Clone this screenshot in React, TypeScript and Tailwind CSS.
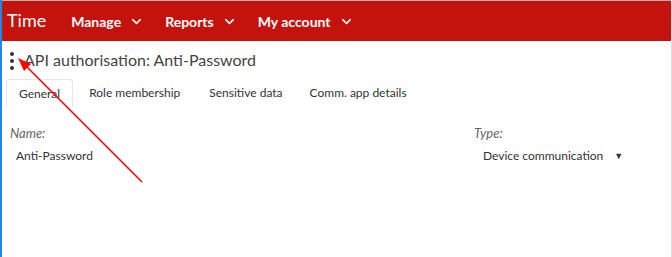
import { ChevronDown } from "lucide-react";

const font = { fontFamily: "Lato, 'Noto Sans', sans-serif" };

export default function App() {
  return (
    <div className="relative w-[672px] h-[257px] bg-white overflow-hidden border-l-2 border-[#1e88e5] border-r border-r-[#e0e0e0]" style={font}>
      {/* -------------------------------------------BARRA SUPERIOR------------------------------------------- */}
      <div className="h-px bg-[#b0b0b0]" />
      <nav className="h-[40px] bg-[#c4120c] flex items-center text-white pl-[5px]">
        <span className="text-[18px] leading-none mr-[25px] pb-[2px]">Time</span>
        <NavItem label="Manage" />
        <NavItem label="Reports" />
        <NavItem label="My account" />
      </nav>

      {/* -------------------------------------------TITULO------------------------------------------- */}
      <div className="flex items-center h-[38px] pl-[8px]">
        <div className="flex flex-col gap-[3px] mr-[10px] mt-[1px]">
          <span className="w-[4px] h-[4px] rounded-full bg-[#333]" />
          <span className="w-[4px] h-[4px] rounded-full bg-[#333]" />
          <span className="w-[4px] h-[4px] rounded-full bg-[#333]" />
        </div>
        <h1 className="text-[16px] text-[#444]">API authorisation: Anti-Password</h1>
      </div>

      {/* -------------------------------------------PESTAÑAS------------------------------------------- */}
      <div className="flex items-end pl-[4px] text-[12px] text-[#333]">
        <div className="h-[28px] px-[12px] flex items-center border border-b-0 border-[#e6e6e6] rounded-t-[3px]">General</div>
        <div className="h-[28px] pl-[16px] pr-[14px] flex items-center">Role membership</div>
        <div className="h-[28px] pl-[15px] pr-[13px] flex items-center">Sensitive data</div>
        <div className="h-[28px] px-[14px] flex items-center">Comm. app details</div>
      </div>

      {/* -------------------------------------------CAMPOS------------------------------------------- */}
      <div className="flex justify-between pt-[18px] pl-[8px] pr-[44px]">
        <div className="flex flex-col">
          <span className="text-[13px] italic text-[#666] leading-[16px]">Name:</span>
          <span className="text-[12px] text-[#333] pl-[6px] mt-[6px]">Anti-Password</span>
        </div>
        <div className="flex flex-col w-[153px]">
          <span className="text-[13px] italic text-[#666] leading-[16px]">Type:</span>
          <span className="text-[12px] text-[#333] pl-[9px] mt-[6px] flex items-center whitespace-nowrap">
            Device communication
            <span className="text-[9px] ml-[11px]">▼</span>
          </span>
        </div>
      </div>

      {/* flecha roja sobre el contenido */}
      <svg className="absolute left-0 top-0 pointer-events-none" width="672" height="257">
        <line x1="140" y1="182" x2="22" y2="64" stroke="#ff0000" strokeWidth="1.6" />
        <polygon points="16,58 29,64 22,71" fill="#ff0000" />
      </svg>
    </div>
  );
}

function NavItem({ label }: { label: string }) {
  return (
    <div className="flex items-center gap-[8px] text-[14px] font-bold mr-[21px]">
      <span>{label}</span>
      <ChevronDown size={15} strokeWidth={2.5} />
    </div>
  );
}
